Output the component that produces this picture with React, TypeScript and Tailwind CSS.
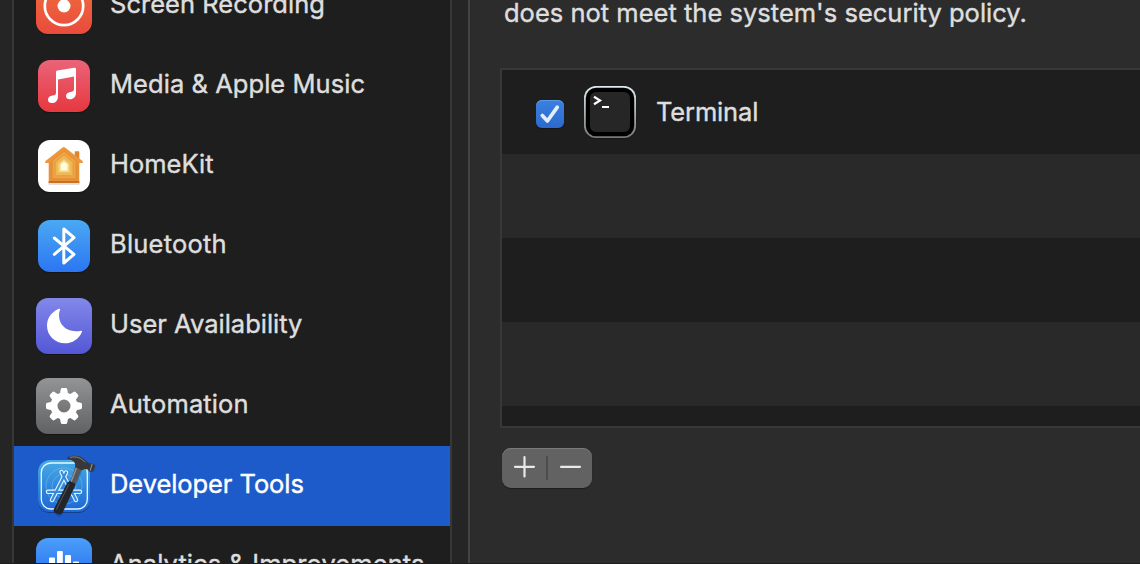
import type { ReactNode } from "react";

const svgProps = { width: 64, height: 80, viewBox: "0 0 64 80", fill: "none" };

function Gradient({ id, from, to }: { id: string; from: string; to: string }) {
  return (
    <linearGradient id={id} x1="0" y1="0" x2="0" y2="1">
      <stop stopColor={from} />
      <stop offset="1" stopColor={to} />
    </linearGradient>
  );
}

/* Rounded tile shared by all the sidebar icons. */
function Tile({ id, from, to, large, children }: { id: string; from: string; to: string; large?: boolean; children: ReactNode }) {
  const size = large ? 56 : 52;
  return (
    <svg {...svgProps} className="shrink-0">
      <defs>
        <Gradient id={id} from={from} to={to} />
      </defs>
      <rect x={32 - size / 2} y={41 - size / 2} width={size} height={size} rx="12" fill="#000" opacity=".3" />
      <rect x={32 - size / 2} y={40 - size / 2} width={size} height={size} rx="12" fill={`url(#${id})`} />
      {children}
    </svg>
  );
}

function ScreenIcon() {
  return (
    <Tile id="screen" from="#f0703c" to="#ea4b3c" large>
      <circle cx="32" cy="40" r="19.2" stroke="#fff" strokeWidth="2.7" />
      <circle cx="32" cy="40" r="6.5" fill="#fff" />
    </Tile>
  );
}

function MusicIcon() {
  return (
    <Tile id="music" from="#ea6479" to="#e6383f">
      <path
        d="M25.2 24.5 42.3 21.8Q44 21.6 44 23V46.5C44 51 41.5 53.3 37.8 53.3C35.3 53.3 34 52 34 50C34 47.4 35.8 46.4 38.6 45.9C41.2 45.5 42 44.8 42 43V30.5L26 33.5V50C26 54.6 23.7 57.1 19.8 57.1C17.3 57.1 16 55.8 16 53.8C16 51.2 17.8 50.1 20.6 49.6C23.2 49.2 24 48.4 24 46.7V26Q24 24.7 25.2 24.5Z"
        fill="#fff"
      />
    </Tile>
  );
}

function HomeIcon() {
  return (
    <Tile id="home" from="#ffffff" to="#ffffff">
      <rect x="16" y="55" width="32" height="4" rx="1.5" fill="#000" opacity=".12" />
      <path d="M16.7 37V56.5H47.3V37L32 23Z" fill="#e7923a" />
      <path d="M42.7 31V26Q42.7 25.3 43.4 25.3H46.6Q47.3 25.3 47.3 26V35Z" fill="#dc842e" />
      <path d="M16.7 55H47.3V56Q47.3 57 46.3 57H17.7Q16.7 57 16.7 56Z" fill="#c9701f" />
      <path d="M13.2 35.3 30.6 21.4Q31.8 20.5 33 21.4L50.8 35.3Q51.5 36.8 50 37H14Q12.5 36.8 13.2 35.3Z" fill="#ee963a" />
      <path d="M20 34.5 32 25 44 34.5V52.9H20Z" fill="#eea443" stroke="#dc8833" strokeWidth=".8" />
      <path d="M23.2 36 32 29 41 36V49.7H23.2Z" fill="#f0b854" stroke="#e09b3d" strokeWidth=".8" />
      <path d="M26 37.6 32 32.7 38 37.6V46.8H26Z" fill="#f6d67c" stroke="#ebb650" strokeWidth=".7" />
      <path d="M28.6 44.4V39Q28.6 38.3 29.2 37.8L32 35.6 34.9 37.8Q35.5 38.3 35.5 39V44.4Z" fill="#fffbe0" />
    </Tile>
  );
}

function BluetoothIcon() {
  return (
    <Tile id="bluetooth" from="#4aa9f3" to="#2c76f2">
      <path d="M22.3 32 42 48.3 31.8 57V23L42 31.7 22.3 48.3" stroke="#fff" strokeWidth="3" strokeLinecap="round" strokeLinejoin="round" />
    </Tile>
  );
}

function MoonIcon() {
  return (
    <Tile id="moon" from="#8288ea" to="#5457d6" large>
      <path
        d="M27 22.8C28 22.3 28.4 23.1 27.9 24.2C27.1 26.2 26.9 28.2 27 30.2C27.3 38 33.5 44.3 41.5 45.1C44 45.3 46.2 45 48.3 44.9C49.7 44.4 50.4 45 49.8 46.2C47 53 40.3 57.3 33 57.3C23 57.3 15 49.5 15 39.7C15 32.3 19.5 25.9 27 22.8Z"
        fill="#fff"
      />
    </Tile>
  );
}

function GearIcon() {
  return (
    <Tile id="gear" from="#939496" to="#606163" large>
      <g fill="#fff">
        {[0, 45, 90, 135, 180, 225, 270, 315].map((angle) => (
          <path key={angle} d="M27.6 29 28.8 23.3Q29 22 30.3 22H33.7Q35 22 35.2 23.3L36.4 29Z" transform={`rotate(${angle} 32 40)`} />
        ))}
      </g>
      <circle cx="32" cy="40" r="10" stroke="#fff" strokeWidth="7" />
    </Tile>
  );
}

function DeveloperIcon() {
  return (
    <Tile id="developer" from="#46abe4" to="#1c66d6">
      <rect x="9.3" y="17" width="46" height="46" rx="9.5" stroke="#e8f7ff" strokeWidth="1.3" />
      <g stroke="#8fd0f5" strokeWidth=".6" opacity=".65">
        <circle cx="32" cy="40" r="18" />
        <circle cx="32" cy="40" r="12" />
      </g>
      <g strokeLinecap="round">
        <g stroke="#e4f5ff" strokeWidth="4.4">
          <path d="M34 26.5 20 54" />
          <path d="M29.5 26 44 54" />
          <path d="M16 45.8H48" />
        </g>
        <g stroke="#348bdd" strokeWidth="2.2">
          <path d="M34 26.5 20 54" />
          <path d="M29.5 26 44 54" />
          <path d="M16 45.8H48" />
        </g>
      </g>
      <path d="M46 26 27 67" stroke="#062f72" strokeWidth="7" opacity=".25" strokeLinecap="round" />
      <path d="M43.5 20 50 22.5 43 39 38 36.5Z" fill="#56575a" />
      <path d="M44.5 22 39 36" stroke="#96989c" strokeWidth="1.2" />
      <path d="M37.6 35 43 37.4Q43.7 38.3 43.2 39.6L30.6 66.5Q29.3 69.3 26 68.3L23.2 67Q20.8 65.8 21.8 63.2L35.4 36.5Z" fill="#242529" />
      <path d="M37 38 24.4 63.5" stroke="#55565b" strokeWidth="1" />
      <path
        d="M35.3 11.5C39.5 9.3 45 9.3 49.5 11.3C52.5 12.8 54 15.5 56.5 16.8L58 17.4 60 16.9 63.3 19.5 61.4 25.4 57.4 25.8 55.7 23.6C53.8 22.5 51.5 22.7 50 24.5L43 20.8C44 17.5 42 14 35.3 12.8Z"
        fill="#37383b"
      />
      <path d="M38 11.5C45 9.7 49.5 12.3 53 16.2" stroke="#85878b" strokeWidth="1" />
      <path d="M60.2 17.7 58.2 24.7" stroke="#999b9f" strokeWidth="1" />
    </Tile>
  );
}

function AnalyticsIcon() {
  return (
    <Tile id="analytics" from="#4b9ff8" to="#1c5cf0" large>
      <g fill="#fff">
        <rect x="17" y="31.5" width="6" height="25" rx="1" />
        <rect x="25" y="25" width="5.8" height="32" rx="1" />
        <rect x="33" y="29" width="6" height="28" rx="1" />
        <rect x="41" y="35.5" width="6" height="21" rx="1" />
      </g>
    </Tile>
  );
}

const items = [
  { label: "Screen Recording", icon: <ScreenIcon />, tracking: "tracking-[0.03px]" },
  { label: "Media & Apple Music", icon: <MusicIcon />, tracking: "tracking-[0.05px]" },
  { label: "HomeKit", icon: <HomeIcon />, tracking: "tracking-[0px]" },
  { label: "Bluetooth", icon: <BluetoothIcon />, tracking: "tracking-[0.22px]" },
  { label: "User Availability", icon: <MoonIcon />, tracking: "tracking-[0px]" },
  { label: "Automation", icon: <GearIcon />, tracking: "tracking-[0.1px]" },
  { label: "Developer Tools", icon: <DeveloperIcon />, tracking: "tracking-[-0.07px]", selected: true },
  { label: "Analytics & Improvements", icon: <AnalyticsIcon />, tracking: "tracking-[0.08px]" },
];

function Sidebar() {
  return (
    <nav className="h-full w-[440px] shrink-0 overflow-hidden border-x-2 border-[#373737] bg-[#1e1e1e]">
      <ul className="-mt-[34px]">
        {items.map((item) => (
          <li key={item.label} className={`flex h-20 items-center pl-[18px] ${item.selected ? "bg-[#1c5bc9] text-white" : ""}`}>
            {item.icon}
            <span className={`-mt-1 ml-[14px] whitespace-nowrap ${item.tracking}`}>{item.label}</span>
          </li>
        ))}
      </ul>
    </nav>
  );
}

function Checkbox() {
  return (
    <span className="mt-1 flex size-7 items-center justify-center rounded-[6px] bg-linear-to-b from-[#3b80e2] to-[#2c6aca] shadow-[inset_0_1px_0_#5c98e8,0_1px_1px_#0005]">
      <svg width="28" height="28" viewBox="0 0 28 28" fill="none">
        <path d="M6.3 15.5 11.4 21 21.3 7.2" stroke="#e4edfb" strokeWidth="3.7" strokeLinecap="round" strokeLinejoin="round" />
      </svg>
    </span>
  );
}

function TerminalIcon() {
  return (
    <svg width="52" height="52" viewBox="0 0 52 52" fill="none" className="ml-5 overflow-visible">
      <defs>
        <Gradient id="terminal" from="#dcedf2" to="#777777" />
      </defs>
      <rect y="1" width="52" height="52" rx="12" fill="#000" opacity=".3" />
      <rect width="52" height="52" rx="12" fill="url(#terminal)" />
      <rect x="1.8" y="1.8" width="48.4" height="48.4" rx="10.4" fill="#000" />
      <rect x="6" y="6" width="40" height="40" rx="6" fill="#262626" />
      <path d="M10 10.8 16 14.5 10 18.2" stroke="#fff" strokeWidth="2.2" />
      <path d="M18 21H25" stroke="#fff" strokeWidth="2" />
    </svg>
  );
}

function AppTable() {
  return (
    <div className="h-[360px] overflow-hidden border-y-2 border-l-2 border-[#383838]">
      <div className="flex h-[84px] items-center bg-[#1e1e1e] pl-[34px]">
        <Checkbox />
        <TerminalIcon />
        <span className="ml-5 tracking-[-0.15px]">Terminal</span>
      </div>
      <div className="h-[84px] bg-[#292929]" />
      <div className="h-[84px] bg-[#1e1e1e]" />
      <div className="h-[84px] bg-[#292929]" />
      <div className="h-[84px] bg-[#1e1e1e]" />
    </div>
  );
}

function AddRemove() {
  return (
    <div className="mt-5 ml-0.5 flex h-10 w-[90px] rounded-[9px] bg-[#626262] shadow-[inset_0_1px_0_#7a7a7a,0_1px_1px_#0005]">
      <button aria-label="Add" className="h-10 w-11">
        <svg width="44" height="40" viewBox="0 0 44 40" stroke="#e9e9e9" strokeWidth="2.2" strokeLinecap="round">
          <path d="M13 18.8H32M22.5 9.2V28.4" />
        </svg>
      </button>
      <span className="mt-2 h-6 w-0.5 bg-[#4d4d4d]" />
      <button aria-label="Remove" className="h-10 w-11">
        <svg width="44" height="40" viewBox="0 0 44 40" stroke="#e9e9e9" strokeWidth="2.2" strokeLinecap="round">
          <path d="M13 18.8H32" />
        </svg>
      </button>
    </div>
  );
}

export default function App() {
  return (
    <div className="flex h-[564px] w-[1140px] overflow-hidden border-b border-[#1f1b1d] bg-[#252525] pl-3 font-['Inter',sans-serif] text-[25.5px] leading-8 text-[#dedede] [-webkit-text-stroke:0.4px_currentColor]">
      <Sidebar />
      <main className="ml-4 min-w-0 flex-1 border-l-2 border-[#434343] bg-[#2c2c2c] pl-[30px]">
        <p className="-mt-[3px] mb-[39px] pl-1 whitespace-nowrap tracking-[0.01px]">does not meet the system's security policy.</p>
        <AppTable />
        <AddRemove />
      </main>
    </div>
  );
}
